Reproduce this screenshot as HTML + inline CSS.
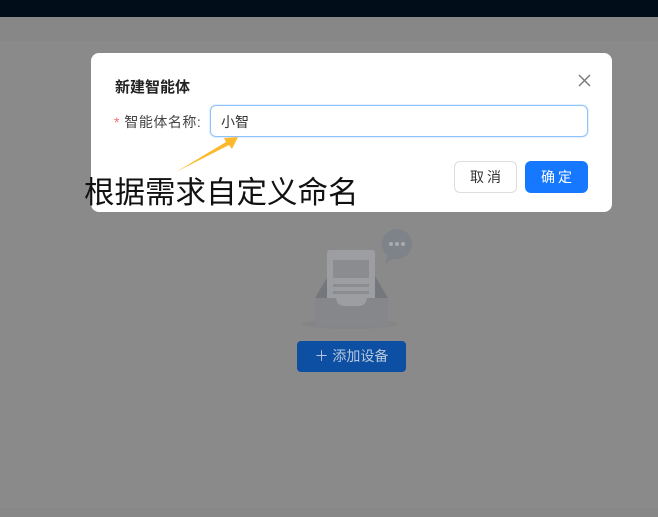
<!DOCTYPE html>
<html><head><meta charset="utf-8"><style>
*{margin:0;padding:0;box-sizing:border-box}
body{width:658px;height:517px;overflow:hidden;background:#8a8a8a;position:relative;font-family:"Liberation Sans","Noto Sans CJK SC",sans-serif}
.abs{position:absolute}
</style></head><body>
<div class="abs" style="left:0;top:0;width:658px;height:17px;background:#020d1a"></div>
<div class="abs" style="left:0;top:17px;width:658px;height:24px;background:#878787"></div>
<div class="abs" style="left:0;top:508px;width:658px;height:9px;background:#878787"></div>

<!-- illustration -->
<svg class="abs" style="left:295px;top:228px" width="125" height="105" viewBox="0 0 125 105">
<ellipse cx="55" cy="96" rx="48" ry="5" fill="#858585"/>
<circle cx="102" cy="16" r="15" fill="#7e8289"/>
<path d="M92 28 L90 36 L99 30 Z" fill="#7e8289"/>
<circle cx="96" cy="16" r="2" fill="#a9abae"/><circle cx="102" cy="16" r="2" fill="#a9abae"/><circle cx="108" cy="16" r="2" fill="#a9abae"/>
<path d="M20 70 L33 48 L80 48 L93 70 Z" fill="#74777b"/>
<rect x="32" y="22" width="48" height="62" rx="3" fill="#9c9ea1"/>
<rect x="38" y="32" width="36" height="18" fill="#8a8c8f"/>
<rect x="38" y="56" width="36" height="3" fill="#8a8c8f"/>
<rect x="38" y="63" width="36" height="3" fill="#8a8c8f"/>
<path d="M20 70 L41 70 Q42 78 50 78 L63 78 Q71 78 72 70 L93 70 L93 96 Q93 99 90 99 L23 99 Q20 99 20 96 Z" fill="#85878b"/>
</svg>
<div class="abs" style="left:297px;top:341px;width:109px;height:31px;background:#0c4fa3;border-radius:4px;color:#b9c7dc;font-size:14px;line-height:31px;text-align:center">＋ 添加设备</div>

<!-- modal -->
<div class="abs" style="left:91px;top:53px;width:521px;height:159px;background:#fff;border-radius:8px"></div>
<div class="abs" style="left:115px;top:76px;font-size:15px;font-weight:bold;color:#222">新建智能体</div>
<svg class="abs" style="left:578px;top:74px" width="13" height="13" viewBox="0 0 13 13"><path d="M1 1L12 12M12 1L1 12" stroke="#777" stroke-width="1.4"/></svg>
<div class="abs" style="left:114px;top:112px;font-size:14px;color:#444;letter-spacing:0.5px"><span style="color:#ff6b6b">*</span> 智能体名称:</div>
<div class="abs" style="left:210px;top:105px;width:378px;height:32px;border:1px solid #8ec3fb;border-radius:6px;box-shadow:0 0 0 1px #e4f0fd"></div>
<div class="abs" style="left:221px;top:112px;font-size:14px;color:#333">小智</div>
<div class="abs" style="left:454px;top:161px;width:63px;height:32px;border:1px solid #ddd;border-radius:6px;font-size:14px;line-height:30px;text-align:center;color:#333;letter-spacing:3px;padding-left:3px">取消</div>
<div class="abs" style="left:525px;top:161px;width:63px;height:32px;background:#1677ff;border-radius:6px;font-size:14px;line-height:32px;text-align:center;color:#fff;letter-spacing:3px;padding-left:3px">确定</div>

<svg class="abs" style="left:170px;top:132px" width="75" height="45" viewBox="0 0 75 45"><path d="M6 40 L56 10 L54 6 L68 5 L62 17 L59 13 Z" fill="#fdb92c"/></svg>
<div class="abs" style="left:84px;top:174px;font-size:30.5px;color:#111;line-height:38px;white-space:nowrap">根据需求自定义命名</div>
</body></html>
